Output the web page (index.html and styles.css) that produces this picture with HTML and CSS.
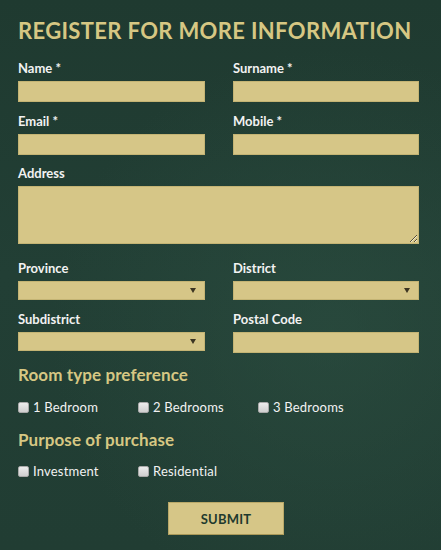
FILE: index.html
```html
<!DOCTYPE html>
<html lang="en">
<head>
<meta charset="utf-8">
<title>Register</title>
<link rel="stylesheet" href="styles.css">
</head>
<body>
<form class="form">
  <h1 class="title">REGISTER FOR MORE INFORMATION</h1>

  <div class="row row-name">
    <div class="field"><label class="label">Name *</label><input class="input" type="text"></div>
    <div class="field"><label class="label">Surname *</label><input class="input" type="text"></div>
  </div>

  <div class="row row-email">
    <div class="field"><label class="label">Email *</label><input class="input" type="text"></div>
    <div class="field"><label class="label">Mobile *</label><input class="input" type="text"></div>
  </div>

  <div class="row-address field">
    <label class="label">Address</label>
    <textarea class="textarea"></textarea>
  </div>

  <div class="row row-province">
    <div class="field"><label class="label">Province</label><span class="select-wrap"><select class="select"><option></option></select></span></div>
    <div class="field"><label class="label">District</label><span class="select-wrap"><select class="select"><option></option></select></span></div>
  </div>

  <div class="row row-sub">
    <div class="field"><label class="label">Subdistrict</label><span class="select-wrap"><select class="select"><option></option></select></span></div>
    <div class="field"><label class="label">Postal Code</label><input class="input" type="text"></div>
  </div>

  <h2 class="heading heading-room">Room type preference</h2>
  <div class="checks checks-room">
    <label class="check"><input class="box" type="checkbox"><span>1 Bedroom</span></label>
    <label class="check"><input class="box" type="checkbox"><span>2 Bedrooms</span></label>
    <label class="check"><input class="box" type="checkbox"><span>3 Bedrooms</span></label>
  </div>

  <h2 class="heading heading-purpose">Purpose of purchase</h2>
  <div class="checks checks-purpose">
    <label class="check"><input class="box" type="checkbox"><span>Investment</span></label>
    <label class="check"><input class="box" type="checkbox"><span>Residential</span></label>
  </div>

  <div class="actions">
    <button class="submit" type="button">SUBMIT</button>
  </div>
</form>
</body>
</html>
```

FILE: styles.css
```css
html, body {
  margin: 0;
  padding: 0;
  height: 100%;
}

body {
  background-color: #213d33;
  background-image:
    radial-gradient(ellipse at 75% 60%, rgba(45, 80, 66, 0.55) 0%, rgba(33, 61, 51, 0) 60%),
    linear-gradient(180deg, #1f3a30 0%, #223f35 50%, #213d33 100%);
  font-family: Lato, "Open Sans", sans-serif;
  color: #f1f1f1;
  overflow: hidden;
}

.form {
  width: 401px;
  padding: 18px 0 0 18px;
}

.title {
  margin: 0;
  font-size: 22px;
  line-height: 26px;
  font-weight: 700;
  letter-spacing: 0.35px;
  color: #d6c783;
  white-space: nowrap;
}

.row {
  display: grid;
  grid-template-columns: 187px 186px;
  column-gap: 28px;
}

.row-name { margin-top: 16px; }
.row-email { margin-top: 11px; }
.row-address { margin-top: 10px; }
.row-province { margin-top: 16px; }
.row-sub { margin-top: 11px; }

.field {
  display: flex;
  flex-direction: column;
}

.label {
  font-size: 13px;
  line-height: 16px;
  font-weight: 700;
  color: #f2f2f2;
  margin-bottom: 5px;
}

.input,
.textarea,
.select {
  display: block;
  box-sizing: border-box;
  width: 100%;
  margin: 0;
  border: 1px solid #c4b474;
  background: #d6c687;
  border-radius: 0;
  outline: none;
  font-family: inherit;
}

.input { height: 21px; }

.textarea {
  height: 58px;
  resize: both;
}

.select-wrap {
  position: relative;
  display: block;
}

.select {
  height: 19px;
  appearance: none;
  -webkit-appearance: none;
}

.select-wrap::after {
  content: "";
  position: absolute;
  right: 9px;
  top: 7px;
  width: 0;
  height: 0;
  border-left: 3px solid transparent;
  border-right: 3px solid transparent;
  border-top: 5px solid #3c3522;
  pointer-events: none;
}

.heading {
  margin: 0;
  font-size: 17px;
  line-height: 20px;
  font-weight: 700;
  letter-spacing: 0.1px;
  color: #d6c783;
}

.heading-room { margin-top: 12px; }
.heading-purpose { margin-top: 15px; }

.checks {
  display: flex;
}

.checks-room { margin-top: 14px; }
.checks-purpose { margin-top: 13px; }

.check {
  display: flex;
  align-items: center;
  width: 120px;
  font-size: 13px;
  line-height: 16px;
  letter-spacing: 0.2px;
  color: #f2f2f2;
}

.box {
  appearance: none;
  -webkit-appearance: none;
  box-sizing: border-box;
  width: 11px;
  height: 11px;
  margin: 0 4px 0 0;
  border: 1px solid #a9a9a9;
  border-radius: 2px;
  background: linear-gradient(180deg, #ececec 0%, #cfcfcf 100%);
}

.actions {
  margin-top: 23px;
  padding-left: 150px;
}

.submit {
  box-sizing: border-box;
  width: 116px;
  height: 33px;
  border: 1px solid #b9a868;
  border-bottom-color: #a99858;
  background: #d6c687;
  color: #1f3a2e;
  font-family: inherit;
  font-size: 13px;
  font-weight: 700;
  letter-spacing: 0.2px;
  padding: 0;
}
```
